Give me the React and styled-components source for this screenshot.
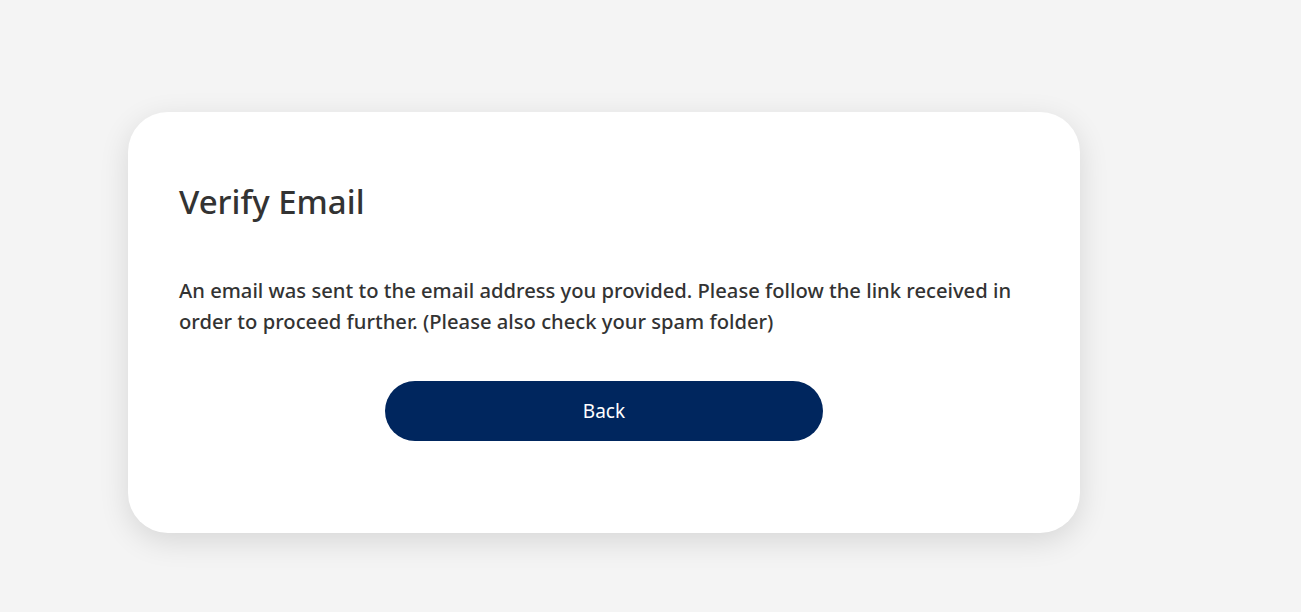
import React from 'react';
import styled, { createGlobalStyle } from 'styled-components';

const Global = createGlobalStyle`
  body {
    margin: 0;
    background: #f4f4f4;
    font-family: "Noto Sans", "Open Sans", sans-serif;
    color: #333;
  }
`;

const Page = styled.div`
  min-height: 612px;
  padding: 112px 0 0 128px;
  box-sizing: border-box;
`;

const Card = styled.div`
  width: 952px;
  height: 421px;
  box-sizing: border-box;
  background: #fff;
  border-radius: 40px;
  box-shadow: 0 8px 30px rgba(0, 0, 0, 0.12);
  padding: 64px 51px 0;
  display: flex;
  flex-direction: column;
`;

const Title = styled.h1`
  margin: 0;
  font-size: 33px;
  font-weight: 500;
  line-height: 52px;
  color: #333;
`;

const Message = styled.p`
  margin: 47px 0 0;
  font-size: 20.2px;
  font-weight: 500;
  line-height: 31px;
  color: #333;
`;

const Button = styled.button`
  align-self: center;
  margin-top: 44px;
  width: 438px;
  height: 60px;
  border: none;
  border-radius: 30px;
  background: #00265e;
  color: #fff;
  font-family: inherit;
  font-size: 19px;
  cursor: pointer;
`;

const App = () => (
  <Page>
    <Global />
    <Card>
      <Title>Verify Email</Title>
      <Message>
        An email was sent to the email address you provided. Please follow the link received in
        order to proceed further. (Please also check your spam folder)
      </Message>
      <Button>Back</Button>
    </Card>
  </Page>
);

export default App;
